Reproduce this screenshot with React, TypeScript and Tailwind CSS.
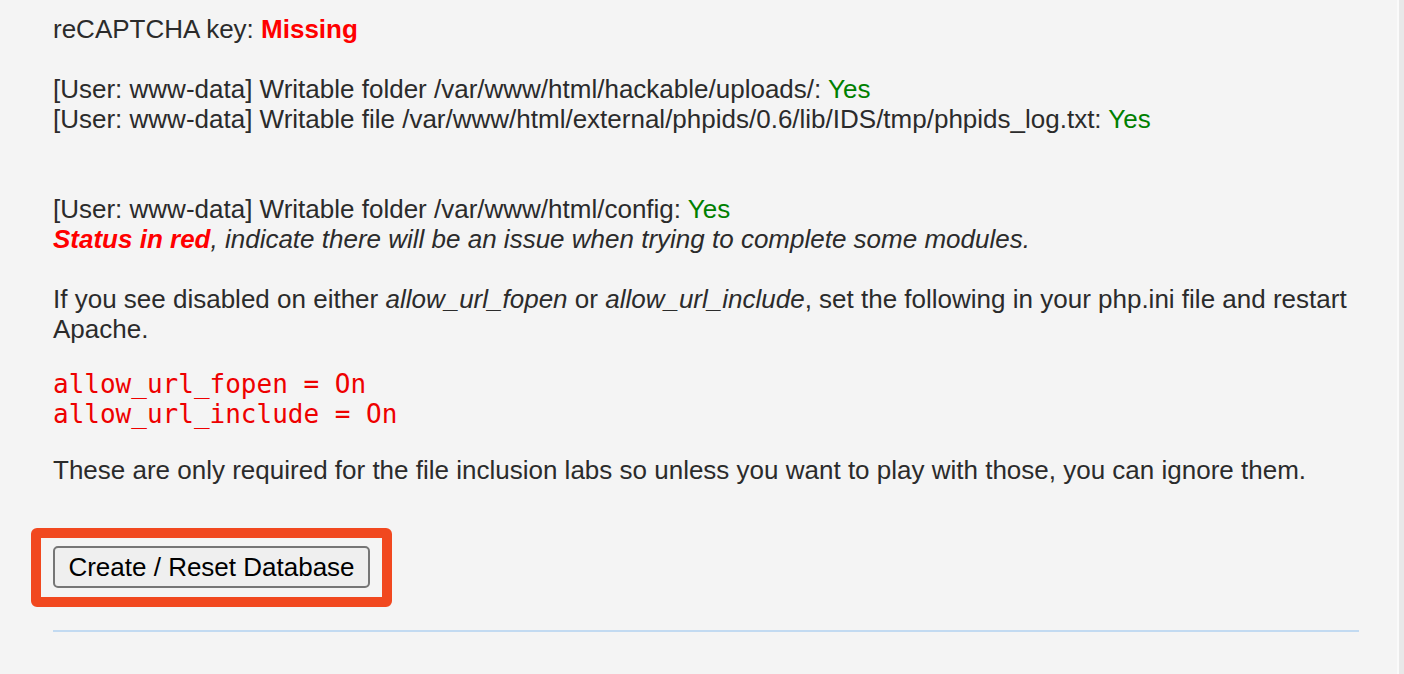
export default function App() {
  return (
    <div className="flex min-h-[674px] w-full bg-[#f4f4f4] text-[#2b2b2b]" style={{ fontFamily: '"Liberation Sans", Arial, sans-serif' }}>
      <div className="flex-1 pl-[53px] pr-[38px] pt-[14px] text-[26px] leading-[30px]">
        <div>
          reCAPTCHA key: <span className="font-bold text-[#ff0000]">Missing</span>
        </div>
        <div className="mt-[30px]">
          [User: www-data] Writable folder /var/www/html/hackable/uploads/: <span className="text-[#008000]">Yes</span>
        </div>
        <div>
          [User: www-data] Writable file /var/www/html/external/phpids/0.6/lib/IDS/tmp/phpids_log.txt: <span className="text-[#008000]">Yes</span>
        </div>
        <div className="mt-[60px]">
          [User: www-data] Writable folder /var/www/html/config: <span className="text-[#008000]">Yes</span>
        </div>
        <div className="italic">
          <span className="font-bold text-[#ff0000]">Status in red</span>, indicate there will be an issue when trying to complete some modules.
        </div>
        <p className="mt-[30px]">
          If you see disabled on either <em>allow_url_fopen</em> or <em>allow_url_include</em>, set the following in your php.ini file and restart Apache.
        </p>
        <pre className="mt-[25px] text-[26px] leading-[30px] text-[#ee0000]" style={{ fontFamily: '"DejaVu Sans Mono", "Liberation Mono", monospace' }}>
          {'allow_url_fopen = On\nallow_url_include = On'}
        </pre>
        <p className="mt-[26px]">
          These are only required for the file inclusion labs so unless you want to play with those, you can ignore them.
        </p>
        <div className="mt-[43px] -ml-[22px] inline-block rounded-[6px] border-[10px] border-[#f1481f] px-[12px] pt-[8px] pb-[9px]">
          <button className="block h-[42px] w-[317px] rounded-[5px] border-2 border-[#767676] bg-[#efefef] text-[26px] leading-[30px] text-black">
            Create / Reset Database
          </button>
        </div>
        <div className="mt-[23px] h-[2px] bg-[#c2daf1]" />
      </div>
      <div className="w-[7px] border-l-2 border-[#fafafa] bg-[#e8e8e8]" />
    </div>
  );
}
